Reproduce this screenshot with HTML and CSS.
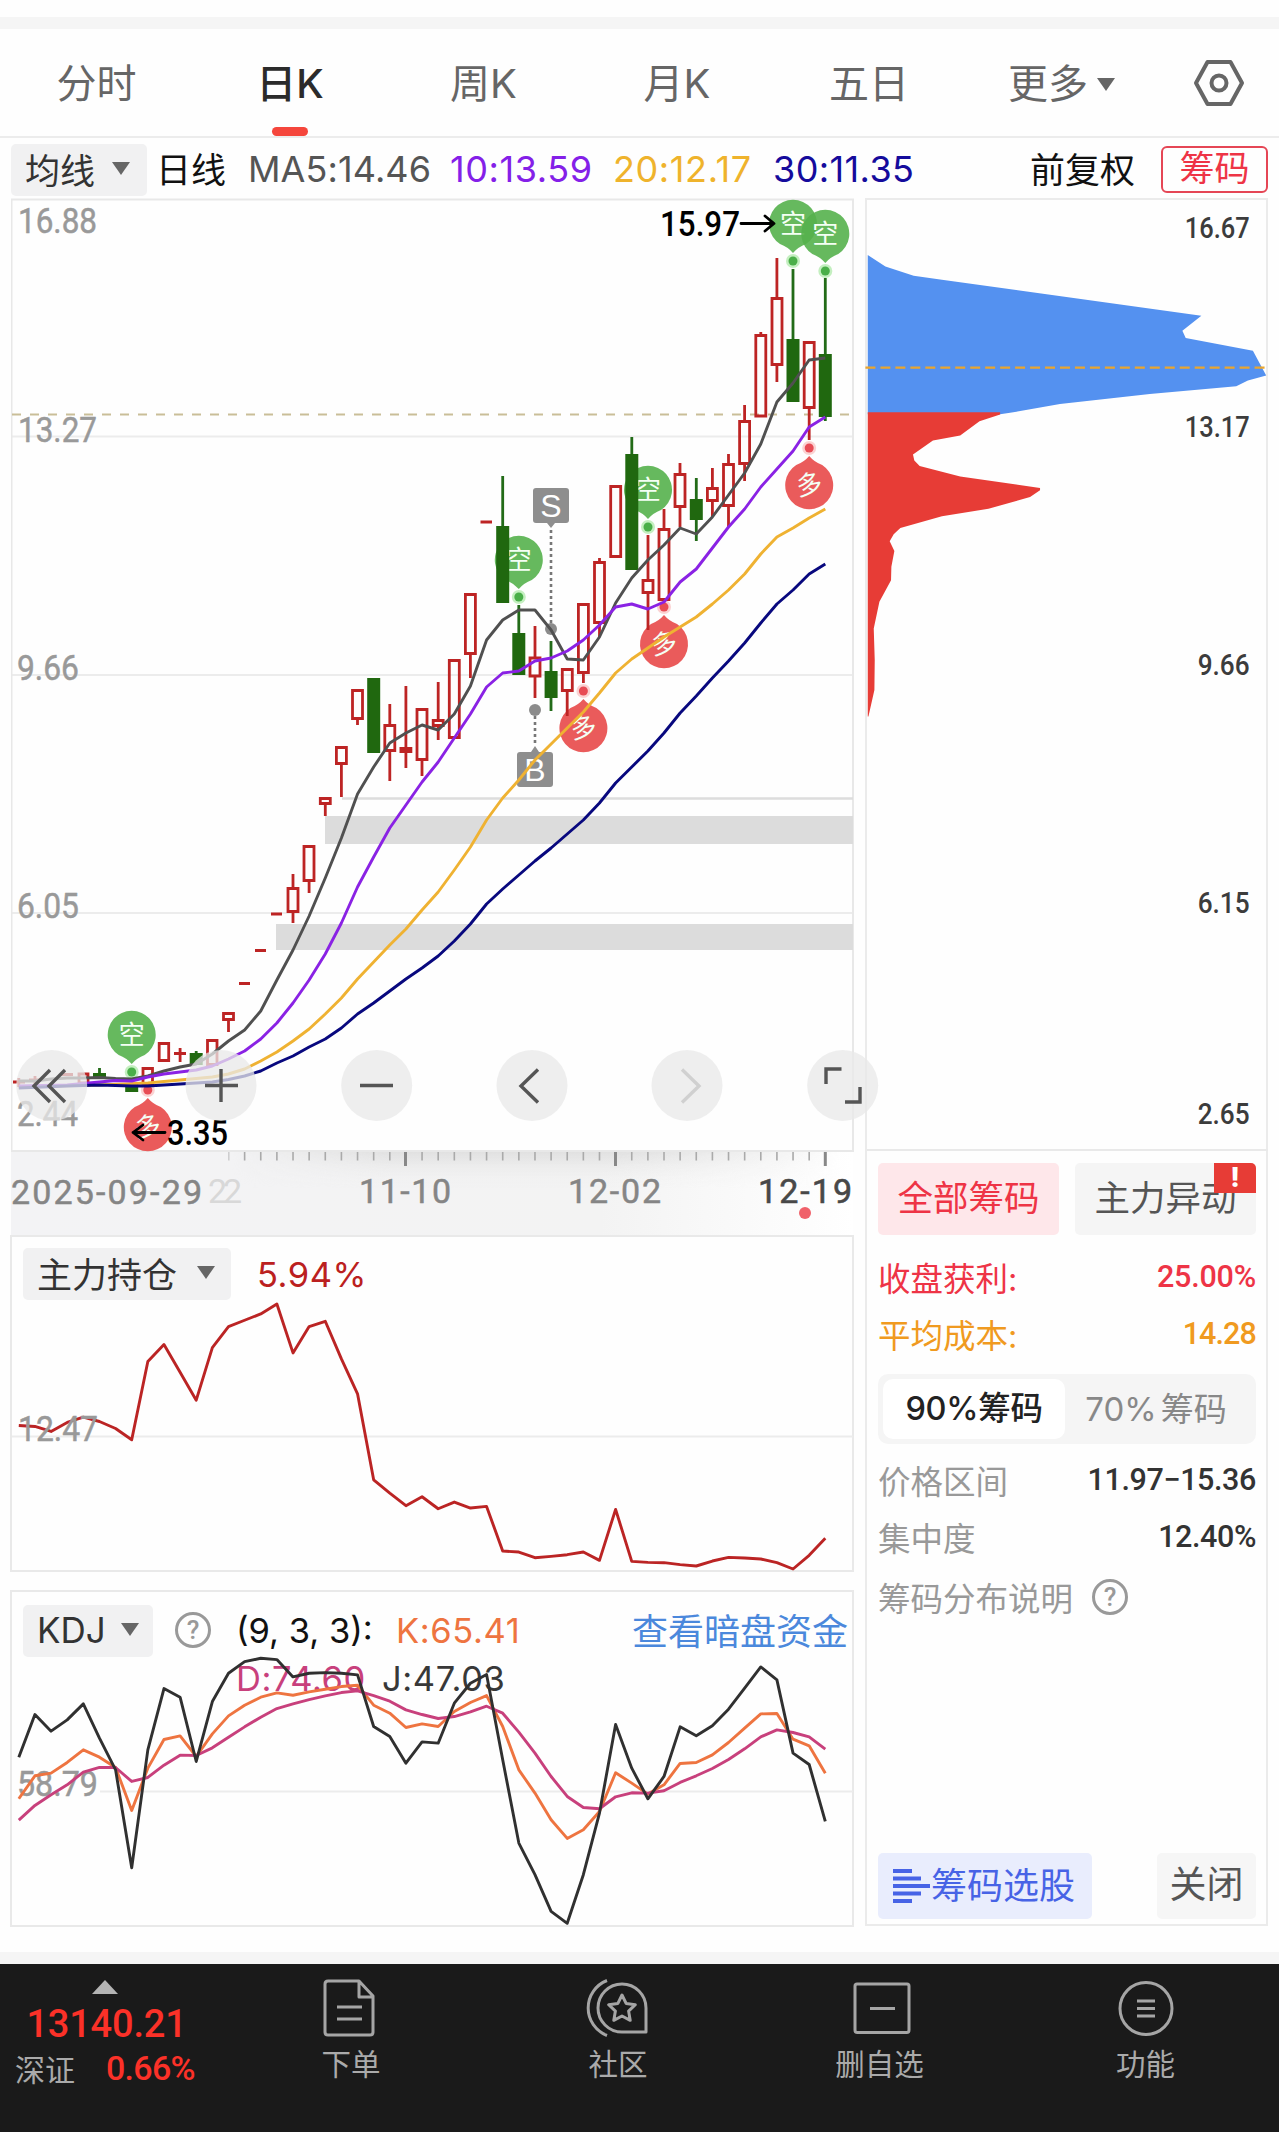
FILE: index.html
```html
<!DOCTYPE html>
<html lang="zh-CN">
<head>
<meta charset="utf-8">
<title>日K</title>
<link rel="stylesheet" href="styles.css">
</head>
<body>
<div class="page">
  <div class="divider top-divider"></div>
  <nav class="tabs">
    <span class="tab">分时</span>
    <span class="tab active">日K</span>
    <span class="tab">周K</span>
    <span class="tab">月K</span>
    <span class="tab">五日</span>
    <span class="tab more">更多<i class="caret"></i></span>
    <svg class="settings" width="52" height="48" viewBox="0 0 52 48"><path d="M14.5 3h23L49 24 37.500 45h-23L3 24z"/><circle cx="26" cy="24" r="7.500"/></svg>
  </nav>
  <div class="toolbar">
    <span class="select">均线<i class="caret"></i></span>
    <span class="period">日线</span>
    <span class="ma ma5">MA5:14.46</span>
    <span class="ma ma10">10:13.59</span>
    <span class="ma ma20">20:12.17</span>
    <span class="ma ma30">30:11.35</span>
    <span class="adjust">前复权</span>
    <span class="chip-toggle">筹码</span>
  </div>

  <main class="content">
    <section class="left">
      <svg class="kline" width="868" height="954" viewBox="11 198 868 954">
        <defs>
          <g id="short"><path class="pin-green" d="M-13 20A24 24 0 1 1 13 20Q5 23 0 29Q-5 23 -13 20z"/><text class="pin-text" y="9">空</text><circle class="halo-green" cy="37" r="7"/><circle class="dot-green" cy="37" r="4.500"/></g>
          <g id="long"><path class="pin-red" d="M-13-20A24 24 0 1 0 13-20Q5-23 0-29Q-5-23-13-20z"/><text class="pin-text" y="9" transform="rotate(-10)">多</text><circle class="halo-red" cy="-37" r="7"/><circle class="dot-red" cy="-37" r="4.500"/></g>
        </defs>
        <path class="grid" d="M12 436.500H853M12 675H853M12 913H853"/>
        <path class="frame" d="M11.500 1151V199.500H853V1151z"/>
        <path class="gap-line" d="M342 798.500H853"/>
        <path class="gap-band" d="M325 816H853V844H325zM276 924H853V950H276z"/>
        <path class="last-price" d="M12 414.500H853"/>
        <g class="axis-text">
          <text x="18" y="233" textLength="79" lengthAdjust="spacingAndGlyphs">16.88</text>
          <text x="18" y="442" textLength="79" lengthAdjust="spacingAndGlyphs">13.27</text>
          <text x="17" y="680" textLength="62" lengthAdjust="spacingAndGlyphs">9.66</text>
          <text x="17" y="918" textLength="62" lengthAdjust="spacingAndGlyphs">6.05</text>
          <text x="17" y="1126" textLength="61" lengthAdjust="spacingAndGlyphs">2.44</text>
        </g>
        <use href="#short" x="131.700" y="1035"/><use href="#short" x="518.800" y="560"/><use href="#short" x="648" y="490"/>
        <use href="#short" x="793" y="224"/><use href="#short" x="825.300" y="234"/>
        <use href="#long" x="147.800" y="1127"/><use href="#long" x="583.400" y="728"/><use href="#long" x="664" y="644"/><use href="#long" x="809.200" y="485"/>
        <path class="link" d="M551 530V625M535 716V746"/>
        <circle class="signal-dot" cx="551" cy="629" r="6"/><circle class="signal-dot" cx="535" cy="710" r="6"/>
        <path class="signal" d="M536 488h30q3 0 3 3v29q0 3-3 3h-11l-4 5-4-5h-11q-3 0-3-3v-29q0-3 3-3zM520 752h11l4-6 4 6h11q3 0 3 3v29q0 3-3 3h-30q-3 0-3-3v-29q0-3 3-3z"/>
        <text class="signal-text" x="551" y="517">S</text><text class="signal-text" x="535" y="781">B</text>
        <path class="wick-up" d="M18.800 1078V1087M35 1076V1084M180.100 1048V1062M228.500 1021V1032M293 874V887M293 913V923M309.100 881V893M325.300 805V816M341.400 765V797M357.500 719V725M389.800 704V724M389.800 751V781M405.900 686V747M405.900 752V768M422 760V776M438.200 682V719M438.200 727V740M470.400 654V678M535 626V657M535 676V698M567.200 691V716M583.400 674V683M599.500 558V561M599.500 623V637M648 535V579M648 593V630M664 509V528M680 463V473M680 507V527M712.400 468V487M712.400 501V517M728.500 454V463M728.500 506V527M744.600 405V420M744.600 464V481M760.800 332V334M776.900 258V297M776.900 365V382M809.200 408V440"/>
        <path class="dash-up" d="M13 1082H25M29 1080H41M61 1074.500H73M174 1053.500H186M239 983.500H250M255 950.500H266M271 914H282M480.500 522H492M400 749.500H411"/>
        <path class="body-up" d="M79 1074h9v9h-9zM143 1068.500h9.500v16h-9.500zM159.200 1043.500h9.500v17h-9.500zM207.500 1040.500h9.500v24h-9.500zM223.500 1013.500h10v6h-10zM288 888.500h10v23h-10zM304 846.500h10v34h-10zM320.300 798.500h10v5h-10zM336.400 747.500h10v16h-10zM352.500 690.500h10v28h-10zM384.800 725.500h10v25h-10zM400.900 748.500h10v3h-10zM417 709.500h10v50h-10zM433.200 720.500h10v5h-10zM449.300 660.500h10v77h-10zM465.400 594.500h10v59h-10zM530 658h10v18h-10zM562.300 669.500h10v21h-10zM578.400 604.500h10v68h-10zM594.500 562.500h10v60h-10zM610.700 486.500h10v70h-10zM643 580.500h10v12h-10zM659 529.500h10v70h-10zM675 474.500h10v32h-10zM707.400 488.500h10v12h-10zM723.500 464.500h10v41h-10zM739.600 421.500h10v42h-10zM755.800 335.500h10v80.500h-10zM772 298.500h10v66h-10zM804.200 342.500h10v65h-10z"/>
        <path class="wick-down" d="M99.500 1068V1078M196.200 1051V1065M502.700 476V526M518.800 605V633M551 641V711M631.800 437V454M696.300 478V541M793 269V339M825.300 278V421"/>
        <path class="body-down" d="M93 1073h13v4h-13zM125.200 1084h13v8h-13zM189.700 1053h13v12h-13zM367.200 678h13v75h-13zM496.200 526h13v77h-13zM512.300 633h13v42h-13zM544.600 671h13v27h-13zM625.300 454h13v116h-13zM689.800 499h13v21h-13zM786.500 339h13v63h-13zM818.800 354h13v63h-13z"/>
        <g transform="translate(18.800 0) scale(16.130 1)">
          <polyline class="line l-ma5" points="0,1081 1,1081 2,1079 3,1078 4,1078 5,1077.500 6,1078.500 7,1079 8,1076 9,1071 10,1067 11,1064 12,1054 13,1041 14,1030 15,1011 16,980 17,950 18,916 19,878 20,838 21,794 22,767 23,743 24,733 25,725 26,730 27,714 28,686 29,640 30,620 31,610 32,610 33,630 34,659 35,660 36,637 37,603 38,578 39,560 40,545 41,528 42,534 43,517 44,495 45,473 46,444 47,402 48,383 49,360 50,358"/>
          <polyline class="line l-ma20" points="0,1087 2,1086 5,1085 8,1083 10,1080 12,1077 13,1074 14,1069 15,1061 16,1052 17,1041 18,1029 19,1014 20,998 21,979 22,962 23,945 24,929 25,910 26,892 27,870 28,847 29,820 30,798 31,780 32,760 33,744 34,728 35,712 36,693 37,673 38,659 39,648 40,637 41,627 42,617 43,604 44,590 45,574 46,554 47,537 48,528 49,518 50,509"/>
          <polyline class="line l-ma10" points="0,1086 3,1085 5,1082 6,1080.500 7,1081 8,1077 9,1074 10,1072 11,1070 12,1066 13,1059 14,1051 15,1039 16,1023 17,1003 18,980 19,954 20,923 21,887 22,857 23,828 24,805 25,782 26,762 27,738 28,714 29,687 30,673 31,671 32,661 33,658 34,651 35,640 36,625 37,607 38,604 39,609 40,602 41,582 42,569 43,548 44,527 45,509 46,487 47,469 48,451 49,427 50,417"/>
          <polyline class="line l-ma30" points="0,1088 3,1086 5,1085 7,1086 8,1086 10,1084 12,1082 13,1079.500 14,1076 15,1071 16,1063 17,1056 18,1047 19,1039 20,1028 21,1014 22,1003 23,991 24,979 25,968 26,956 27,941 28,924 29,904 30,889 31,875 32,861 33,848 34,834 35,820 36,803 37,783 38,767 39,751 40,733 41,713 42,696 43,678 44,661 45,643 46,623 47,604 48,590 49,574 50,564"/>
        </g>
        <text class="extreme" x="660" y="236" textLength="80" lengthAdjust="spacingAndGlyphs">15.97</text>
        <path class="arrow" d="M741 223.500H773M765 216l9 7.500-9 7.500"/>
        <text class="extreme" x="167" y="1145" textLength="61" lengthAdjust="spacingAndGlyphs">3.35</text>
        <path class="arrow" d="M165 1132.500H133M143 1125l-10 7.500 10 7.500"/>
        <g class="ctl-bg"><circle cx="51.700" cy="1085.500" r="35.500"/><circle cx="221" cy="1085.500" r="35.500"/><circle cx="376.700" cy="1085.500" r="35.500"/><circle cx="532" cy="1085.500" r="35.500"/><circle cx="687" cy="1085.500" r="35.500"/><circle cx="842.700" cy="1085.500" r="35.500"/></g>
        <path class="ctl" d="M50 1070L34 1086 50 1102M65 1070L49 1086 65 1102M205 1085.500H238M221 1069V1102M360 1085.500H393M538 1069.500L521 1086 538 1102.500M826 1084V1069H841.500M845 1102H860V1087"/>
        <path class="ctl off" d="M682 1069.500L699 1086 682 1102.500"/>
      </svg>
      <svg class="dates" width="855" height="84" viewBox="11 1152 855 84">
        <defs>
          <linearGradient id="fade"><stop offset="0" stop-color="#f3f3f5"/><stop offset=".7" stop-color="#f3f3f3"/><stop offset="1" stop-color="#fff"/></linearGradient>
          <linearGradient id="shade" x2="0" y2="1"><stop offset="0" stop-color="#e0e0e0"/><stop offset="1" stop-color="#f3f3f3" stop-opacity="0"/></linearGradient>
          <linearGradient id="shadeMask"><stop offset=".05" stop-color="#000"/><stop offset=".3" stop-color="#fff"/><stop offset=".65" stop-color="#fff"/><stop offset="1" stop-color="#000"/></linearGradient>
          <mask id="m"><rect x="200" y="1152" width="640" height="40" fill="url(#shadeMask)"/></mask>
        </defs>
        <rect x="11" y="1152" width="842" height="84" fill="url(#fade)"/>
        <rect x="200" y="1152" width="640" height="36" fill="url(#shade)" mask="url(#m)"/>
        <path class="ticks" d="M228.500 1156H825" />
        <path class="major" d="M405.500 1152V1166M615.500 1152V1166M825.300 1152V1166"/>
        <g class="date"><text x="11" y="1204" textLength="191">2025-09-29</text><text class="ghost" x="208" y="1203" textLength="34">22</text><text x="359" y="1203" textLength="92">11-10</text><text x="568" y="1203" textLength="93">12-02</text><text class="now" x="758" y="1203" textLength="94">12-19</text></g>
        <circle cx="805" cy="1213" r="6" fill="#f0616a"/>
      </svg>
      <div class="indicator holdings">
        <div class="ind-head"><span class="select">主力持仓<i class="caret"></i></span><span class="hold-value">5.94%</span></div>
        <svg class="plot" width="842" height="336" viewBox="11 1236 842 336">
          <path class="grid" d="M12 1436.500H853"/>
          <g transform="translate(18.800 1240) scale(16.130 .333)"><polyline class="line l-hold" points="0,557 1,560 2,575 3,548 4,532 5,545 6,566 7,600 8,365 9,314 10,397 11,481 12,323 13,260 14,241 15,222 16,192 17,339 18,260 19,244 20,357 21,462 22,720 23,760 24,798 25,771 26,807 27,787 28,805 29,800 30,934 31,937 32,954 33,950 34,945 35,937 36,962 37,809 38,965 39,968 40,969 41,975 42,979 43,964 44,953 45,955 46,958 47,969 48,988 49,947 50,896"/></g>
          <g class="axis-text"><text x="18" y="1441" textLength="80" lengthAdjust="spacingAndGlyphs">12.47</text></g>
        </svg>
      </div>
      <div class="indicator kdj">
        <div class="ind-head">
          <span class="select">KDJ<i class="caret"></i></span>
          <span class="help">?</span>
          <div class="kdj-values"><span>(9, 3, 3):</span><span class="k">K:65.41</span><span class="d">D:74.60</span><span class="j">J:47.03</span></div>
          <span class="dark-pool">查看暗盘资金</span>
        </div>
        <svg class="plot" width="842" height="336" viewBox="11 1591 842 336">
          <path class="grid" d="M100 1791.500H853"/>
          <g class="axis-text"><text x="17" y="1796" textLength="81" lengthAdjust="spacingAndGlyphs">58.79</text></g>
          <g transform="translate(18.800 1580) scale(16.130 .333)">
            <polyline class="line l-k" points="0,657 1,588 2,580 3,548 4,510 5,532 6,563 7,692 8,565 9,479 10,468 11,530 12,462 13,408 14,376 15,352 16,339 17,346 18,336 19,328 20,320 21,316 22,376 23,400 24,443 25,432 26,440 27,395 28,368 29,347 30,440 31,570 32,640 33,720 34,776 35,750 36,695 37,579 38,610 39,643 40,615 41,551 42,548 43,525 44,488 45,445 46,402 47,401 48,478 49,498 50,580"/>
            <polyline class="line l-d" points="0,721 1,677 2,645 3,615 4,577 5,563 6,563 7,605 8,593 9,556 10,526 11,527 12,504 13,472 14,441 15,412 16,386 17,372 18,359 19,348 20,338 21,333 22,347 23,364 24,390 25,404 26,416 27,410 28,396 29,379 30,400 31,457 32,520 33,590 34,650 35,683 36,687 37,651 38,639 39,640 40,633 41,608 42,588 43,566 44,539 45,507 46,471 47,450 48,458 49,471 50,508"/>
            <polyline class="line l-j" points="0,532 1,404 2,454 3,420 4,372 5,475 6,570 7,864 8,510 9,326 10,352 11,545 12,365 13,280 14,245 15,235 16,239 17,291 18,280 19,278 20,280 21,285 22,440 23,470 24,550 25,486 26,490 27,370 28,310 29,284 30,540 31,790 32,885 33,995 34,1031 35,885 36,700 37,434 38,565 39,657 40,590 41,441 42,468 43,438 44,388 45,325 46,261 47,300 48,520 49,554 50,725"/>
          </g>
        </svg>
      </div>
    </section>

    <aside class="right">
      <svg class="distribution" width="401" height="951" viewBox="867 199 401 951">
        <g transform="translate(860 230) scale(.3333)">
          <path fill="#5491f0" d="M22 72L75 107 160 135 245 147 1025 255 968 300 978 322 1180 360 1220 435 1165 450 1130 467 870 490 600 520 450 547 420 551H22z"/>
          <path fill="#e73c36" d="M22 545H420V552L358 572 300 615 218 630 158 672 162 690 178 707 300 738 540 773V780L510 800 385 835 245 858 120 893 100 912 88 933 102 962 93 1010 92 1050 57 1115 40 1195 43 1290 42 1380 24 1460H22z"/>
          <path class="cost-line" d="M15 411H1218"/>
        </g>
        <g class="price-text"><text x="1185" y="237" textLength="65" lengthAdjust="spacingAndGlyphs">16.67</text><text x="1185" y="437" textLength="65" lengthAdjust="spacingAndGlyphs">13.17</text><text x="1198" y="675" textLength="52" lengthAdjust="spacingAndGlyphs">9.66</text><text x="1198" y="914" textLength="52" lengthAdjust="spacingAndGlyphs">6.15</text><text x="1198" y="1125" textLength="52" lengthAdjust="spacingAndGlyphs">2.65</text></g>
      </svg>
      <div class="chip-panel">
        <div class="chip-tabs"><span class="chip-tab on">全部筹码</span><span class="chip-tab">主力异动<b class="badge">!</b></span></div>
        <div class="row profit"><span>收盘获利:</span><b>25.00%</b></div>
        <div class="row cost"><span>平均成本:</span><b>14.28</b></div>
        <div class="segment"><span class="seg on">90%筹码</span><span class="seg">70%<em>筹码</em></span></div>
        <div class="row"><span>价格区间</span><b>11.97−15.36</b></div>
        <div class="row"><span>集中度</span><b>12.40%</b></div>
        <div class="row explain"><span>筹码分布说明</span><span class="help">?</span></div>
        <div class="actions">
          <span class="pick"><svg width="37" height="34" viewBox="0 0 37 34"><path d="M0 2H19M0 9.500H28M0 17H37M0 24.500H28M0 32H19"/></svg>筹码选股</span>
          <span class="close">关闭</span>
        </div>
      </div>
    </aside>
  </main>

  <div class="divider bottom-divider"></div>
  <footer class="bottom-bar">
    <div class="index">
      <i class="up"></i>
      <div class="index-value">13140.21</div>
      <div class="index-row"><span class="index-name">深证</span><span>0.66%</span></div>
    </div>
    <div class="action order"><svg width="60" height="60" viewBox="0 0 60 60"><path d="M8 3H39L53 18V54Q53 57 50 57H8Q5 57 5 54V6Q5 3 8 3zM39 3V19H53M17 29H42M17 41H42"/></svg><span>下单</span></div>
    <div class="action community"><svg width="64" height="60" viewBox="0 0 64 60"><path d="M37 6A24 24 0 1 0 37 54H61V30A24 24 0 0 0 37 6zM22 2.500A29.500 29.500 0 0 0 22 57.500M37 17L41.100 25.400 50.300 26.700 43.600 33.100 45.200 42.300 37 38 28.800 42.300 30.400 33.100 23.700 26.700 32.900 25.400z"/></svg><span>社区</span></div>
    <div class="action remove"><svg width="60" height="60" viewBox="0 0 60 60"><path d="M5 6H55Q57 6 57 8V52Q57 54.500 55 54.500H5Q3 54.500 3 52V8Q3 6 5 6zM18 30.500H43"/></svg><span>删自选</span></div>
    <div class="action tools"><svg width="60" height="60" viewBox="0 0 60 60"><circle cx="30" cy="30.500" r="26"/><path d="M21 23H39M21 30.500H39M21 38H39"/></svg><span>功能</span></div>
  </footer>
</div>
</body>
</html>
```
FILE: styles.css
```css
* { box-sizing: border-box; }
body { margin: 0; background: #fff; color: #333; font-family: "Inter", "Noto Sans CJK SC", sans-serif; }
.page { width: 1279px; height: 2132px; display: flex; flex-direction: column; background: #fefefe; overflow: hidden; }
svg { display: block; }
i, em { font-style: normal; }
.divider { height: 12px; background: #f5f5f5; flex: none; }
.top-divider { margin-top: 17px; }
.caret { display: inline-block; border: solid transparent; border-width: 13px 9.500px 0; border-top-color: #666; }

.tabs { display: grid; grid-template-columns: 193px 193px 195px 192px 192px 193px 1fr; grid-template-rows: 107px; height: 109px; border-bottom: 2px solid #ececec; font-size: 40px; color: #666; }
.tab { display: flex; align-items: center; justify-content: center; padding-top: 3px; line-height: 60px; position: relative; }
.tab.active { color: #2b2b2b; font-weight: 500; padding-left: 1px; }
.tab.active::after { content: ""; position: absolute; left: 79px; bottom: 0; width: 36px; height: 9px; border-radius: 5px; background: #f5463c; }
.more { gap: 9px; }
.settings { align-self: center; margin-left: 35px; }
.settings path, .settings circle { fill: none; stroke: #666; stroke-width: 4; stroke-linejoin: round; }

.toolbar { display: grid; grid-template-columns: 136px 89px 201px 164px 159px 257px 144px 107px; margin: 4px 0 0 11px; height: 52px; align-items: center; font-size: 35px; color: #111; white-space: nowrap; }
.toolbar .period { padding: 0 0 4px 9px; }
.select { display: inline-flex; align-items: center; gap: 17px; height: 52px; padding: 0 0 3px 14px; background: #f1f1f2; border-radius: 5px; color: #333; font-size: 35px; white-space: nowrap; }
.ma { font-size: 36px; letter-spacing: .4px; padding-bottom: 1px; }
.ma5 { color: #555; padding-left: 12px; letter-spacing: .1px; }
.ma10 { color: #8420e8; padding-left: 13px; letter-spacing: .6px; }
.ma20 { color: #efb32c; padding-left: 12px; letter-spacing: .6px; }
.ma30 { color: #150b9c; padding-left: 13px; }
.adjust { padding: 0 0 4px 13px; }
.chip-toggle { height: 47px; line-height: 41px; border: 2px solid #e54655; border-radius: 6px; color: #ee3446; text-align: center; }

.content { display: flex; margin: 4px 0 0 11px; gap: 12px; height: 1729px; flex: none; }
.left { width: 842px; flex: none; }
.kline { position: relative; z-index: 1; margin-right: -26px; }
.grid, .frame { fill: none; stroke: #e8e8e8; stroke-width: 2; }
.grid { stroke: #ececec; }
.gap-line { stroke: #ddd; stroke-width: 2.500; }
.gap-band { fill: #dcdcdc; }
.last-price { stroke: #c9be98; stroke-width: 1.800; stroke-dasharray: 9 9; }
.axis-text { font: 35px Roboto, sans-serif; fill: #999; stroke: #999; stroke-width: .5; }
.line { fill: none; stroke-width: 2.900; stroke-linejoin: round; vector-effect: non-scaling-stroke; }
.l-ma5 { stroke: #505050; } .l-ma10 { stroke: #8a22e4; } .l-ma20 { stroke: #efb232; } .l-ma30 { stroke: #08087e; }
.l-hold { stroke: #bb2424; } .l-k { stroke: #ee7440; } .l-d { stroke: #c8407c; } .l-j { stroke: #303030; }
.wick-up, .body-up, .dash-up { fill: none; stroke: #bd2424; stroke-width: 2.800; }
.dash-up { stroke-width: 3.200; }
.wick-down { stroke: #226b18; stroke-width: 2.800; fill: none; }
.body-down { fill: #20680f; }
.pin-green { fill: #55b14c; fill-opacity: .9; } .pin-red { fill: #e95252; fill-opacity: .95; }
.pin-text { font: 400 26px "Noto Sans CJK SC", sans-serif; text-anchor: middle; fill: #f4fff4; }
.halo-green { fill: #c4efc0; } .dot-green { fill: #4aaf49; } .halo-red { fill: #fbd2d2; } .dot-red { fill: #e84c55; }
.signal { fill: #8e8e8e; } .signal-dot { fill: #777; fill-opacity: .85; }
.signal-text { font: 32px "Liberation Sans", sans-serif; fill: #fff; text-anchor: middle; }
.link { stroke: #777; stroke-width: 2.600; stroke-dasharray: 3 3; }
.extreme { font: 500 35px Roboto, sans-serif; fill: #000; }
.arrow { fill: none; stroke: #000; stroke-width: 2.800; stroke-linecap: round; stroke-linejoin: round; }
.ctl-bg { fill: #e8e8e8; fill-opacity: .76; }
.ctl { fill: none; stroke: #555; stroke-width: 3.400; }
.ctl.off { stroke: #d0d0d0; }

.dates { position: relative; }
.ticks { stroke: #aaa; stroke-width: 9; stroke-dasharray: 1.600 14.530; stroke-dashoffset: .8; }
.major { stroke: #888; stroke-width: 3; }
.date { font: 34px Roboto, sans-serif; fill: #858585; stroke: #858585; stroke-width: .5; }
.date .ghost { fill: #d8d8d8; stroke: none; } .date .now { fill: #484848; stroke: #484848; stroke-width: .6; }

.indicator { position: relative; border: 2px solid #e9e9e9; height: 337px; width: 844px; margin-left: -1px; }
.holdings { margin-top: -1px; }
.kdj { margin-top: 18px; }
.plot { position: absolute; left: -1px; top: -1px; }
.ind-head { display: flex; align-items: center; padding: 11px 0 0 11px; }
.holdings .select { width: 208px; gap: 20px; }
.hold-value { color: #bb2020; font-size: 34.500px; margin: 1px 0 0 26px; letter-spacing: .5px; }
.kdj .select { width: 130px; gap: 15px; }
.help { width: 36px; height: 36px; border: 3px solid #999; border-radius: 50%; color: #999; font: 500 26px/31px Roboto, sans-serif; text-align: center; flex: none; }
.kdj .help { margin: 0 0 2px 22px; }
.kdj-values { display: grid; grid-template-columns: 146px auto; height: 52px; margin-left: 25px; line-height: 48px; font-size: 34.500px; color: #111; white-space: nowrap; width: 290px; padding-top: 2px; }
.kdj-values .k, .kdj-values .d, .kdj-values .j { letter-spacing: .6px; }
.kdj-values .k { color: #ee7440; padding-left: 14px; }
.kdj-values .d { color: #c8407c; }
.kdj-values .j { color: #383838; }
.dark-pool { font-size: 36px; color: #4b88dc; margin: 0 0 4px 106px; white-space: nowrap; }

.right { width: 403px; height: 1728px; border: 2px solid #ebebeb; flex: none; }
.distribution { position: relative; border-bottom: 2px solid #e9e9e9; margin-right: -2px; overflow: visible; }
.cost-line { stroke: #e9a52f; stroke-width: 7; stroke-dasharray: 30 15; }
.price-text { font: 500 29.500px Roboto, sans-serif; fill: #3c3c3c; }
.chip-panel { padding: 12px 10px 0 11px; height: 774px; display: flex; flex-direction: column; }
.chip-tabs { display: flex; justify-content: space-between; margin-bottom: 13px; }
.chip-tab { width: 181px; height: 72px; border-radius: 5px; background: #f5f5f5; color: #555; font-size: 35.500px; line-height: 72px; text-align: center; position: relative; }
.chip-tab.on { background: #fee7ea; color: #ee3446; }
.badge { position: absolute; right: 0; top: 0; width: 42px; height: 30px; background: #e73c36; border-top-right-radius: 5px; color: #fff; font: 800 27px/30px Inter, sans-serif; }
.row { height: 57px; display: flex; align-items: center; justify-content: space-between; color: #999; font-size: 32.500px; white-space: nowrap; flex: none; }
.row b { font: 500 30.500px Roboto, sans-serif; letter-spacing: -.4px; color: #333; }
.profit, .profit b { color: #ee3446; }
.profit b { letter-spacing: -.2px; }
.cost { height: 56px; }
.cost, .cost b { color: #f09a20; }
.cost b { letter-spacing: -.9px; }
.segment { display: flex; height: 70px; margin: 13px 0 7px; padding: 5px; border-radius: 10px; background: #f5f5f5; font-size: 33px; color: #888; flex: none; }
.seg { width: 182px; line-height: 60px; text-align: center; white-space: nowrap; }
.seg em { margin-left: 4px; }
.seg.on { background: #fff; border-radius: 10px; color: #222; font-weight: 500; font-size: 32.500px; letter-spacing: -.3px; }
.explain { justify-content: flex-start; gap: 19px; height: 62px; }
.explain .help { margin-top: 2px; }
.actions { display: flex; justify-content: space-between; margin-top: auto; margin-bottom: 6px; height: 66px; line-height: 63px; font-size: 36px; }
.pick { display: flex; align-items: center; width: 214px; padding-left: 15px; gap: 1px; background: #e9edfd; border-radius: 5px; color: #4763e6; white-space: nowrap; }
.pick path { stroke: #4763e6; stroke-width: 4; }
.close { width: 99px; background: #f6f6f6; border-radius: 5px; text-align: center; color: #555; font-size: 37px; }

.bottom-divider { margin-top: 25px; }
.bottom-bar { flex: 1; display: flex; background: #1a1a1a; color: #aaa; font-size: 29.500px; }
.index { width: 210px; margin-right: 7px; color: #fb3128; display: flex; flex-direction: column; align-items: center; padding-top: 16px; font-family: Roboto, sans-serif; }
.up { border: solid transparent; border-width: 0 13px 14px; border-bottom-color: #b4b4b4; }
.index-value { font-size: 38px; line-height: 38px; font-weight: 500; margin: 11px 0 0 3px; letter-spacing: -.2px; }
.index-row { display: flex; gap: 31px; font-size: 34px; line-height: 50px; align-self: flex-start; padding-left: 15px; font-weight: 500; letter-spacing: -.7px; }
.index-name { color: #aaa; font: 30px/51px "Noto Sans CJK SC", sans-serif; letter-spacing: 0; }
.action { display: flex; flex-direction: column; align-items: center; padding-top: 14px; line-height: 53px; width: 265px; }
.order span, .community span { padding-left: 3px; }
.community { width: 269px; }
.remove { width: 262px; }
.remove span { padding-right: 5px; }
.action svg { fill: none; stroke: #a5a5a5; stroke-width: 3; stroke-linejoin: round; }
```
